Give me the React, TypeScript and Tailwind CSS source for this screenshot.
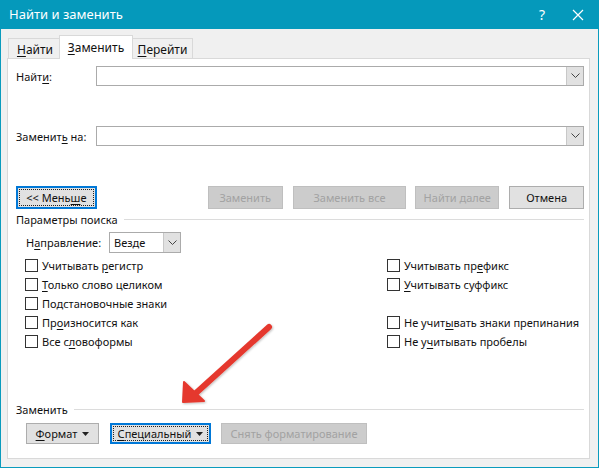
import React from 'react';

const font = { fontFamily: '"Noto Sans", "Open Sans", Arial, sans-serif' };

function U({ children }: { children: React.ReactNode }) {
    return <span className="underline underline-offset-2">{children}</span>;
}

function Chevron() {
    return (
        <svg width="9" height="6" viewBox="0 0 9 6" className="block">
            <path d="M0.5 0.5 L4.5 4.5 L8.5 0.5" fill="none" stroke="#444" strokeWidth="1" />
        </svg>
    );
}

function Caret() {
    return (
        <svg width="7" height="4" viewBox="0 0 7 4" className="ml-[5px] inline-block">
            <path d="M0 0 H7 L3.5 4 Z" fill="#222" />
        </svg>
    );
}

function Combo({ className }: { className: string }) {
    return (
        <div className={`flex h-[20px] border border-[#ababab] bg-white ${className}`}>
            <div className="flex-1" />
            <div className="flex w-[17px] items-center justify-center border-l border-[#c8c8c8] bg-[#e1e1e1]">
                <Chevron />
            </div>
        </div>
    );
}

function Btn({
    children,
    className = '',
    variant = 'normal',
}: {
    children: React.ReactNode;
    className?: string;
    variant?: 'normal' | 'disabled' | 'focus';
}) {
    if (variant === 'disabled') {
        return (
            <div className={`flex items-center justify-center border border-[#bfbfbf] bg-[#cccccc] text-[#a2a2a2] ${className}`}>
                {children}
            </div>
        );
    }
    if (variant === 'focus') {
        return (
            <div className={`flex border-2 border-[#0078d7] bg-[#e1e1e1] p-[1px] ${className}`}>
                <div className="flex flex-1 items-center justify-center border border-dotted border-[#222]">{children}</div>
            </div>
        );
    }
    return (
        <div className={`flex items-center justify-center border border-[#adadad] bg-[#e1e1e1] ${className}`}>
            {children}
        </div>
    );
}

function Check({ children }: { children: React.ReactNode }) {
    return (
        <div className="flex h-[19px] items-center whitespace-nowrap">
            <div className="h-[13px] w-[13px] shrink-0 border border-[#333] bg-white" />
            <span className="ml-[4px]">{children}</span>
        </div>
    );
}

export default function App() {
    return (
        <div
            className="relative flex h-[468px] w-[599px] flex-col border border-t-0 border-[#0a9bbd] bg-[#f0f0f0] text-[11px] leading-none text-[#111]"
            style={font}
        >
            {/* title bar */}
            <div className="-mx-[1px] flex h-[29px] items-center bg-[#0599bb] pl-[9px] pr-[12px] text-white">
                <span className="text-[13px]">Найти и заменить</span>
                <span className="ml-auto text-[14px]">?</span>
                <svg width="12" height="12" viewBox="0 0 12 12" className="ml-[27px] mr-[3px]">
                    <path d="M1 1 L11 11 M11 1 L1 11" stroke="white" strokeWidth="1.2" />
                </svg>
            </div>

            <div className="flex flex-1 flex-col px-[6px] pb-[8px]">
                {/* tabs */}
                <div className="mt-[5px] flex h-[24px] items-end pl-[1px] text-[12px]">
                    <div className="-mr-[1px] flex h-[20px] w-[52px] items-center justify-center border border-b-0 border-[#d9d9d9] bg-[#f0f0f0] pl-[2px] pt-[2px]">
                        <span><U>Н</U>айти</span>
                    </div>
                    <div className="relative z-10 -mb-[1px] flex h-[24px] w-[74px] items-center justify-center border border-b-0 border-[#d9d9d9] bg-white">
                        <span><U>З</U>аменить</span>
                    </div>
                    <div className="-ml-[1px] flex h-[20px] w-[61px] items-center justify-center border border-b-0 border-[#d9d9d9] bg-[#f0f0f0] pt-[2px]">
                        <span><U>П</U>ерейти</span>
                    </div>
                </div>

                {/* panel */}
                <div className="flex w-[583px] flex-1 flex-col border border-[#d9d9d9] bg-white pl-[8px] pr-[5px] pt-[7px]">
                    <div className="flex items-center">
                        <span className="w-[80px]">Найт<U>и</U>:</span>
                        <Combo className="flex-1" />
                    </div>
                    <div className="mt-[40px] flex items-center">
                        <span className="w-[80px]">Заменит<U>ь</U> на:</span>
                        <Combo className="flex-1" />
                    </div>

                    <div className="mt-[40px] flex h-[23px]">
                        <Btn variant="focus" className="w-[81px]">
                            <span>&lt;&lt; Мень<U>ш</U>е</span>
                        </Btn>
                        <Btn variant="disabled" className="ml-[111px] w-[75px]">Заменить</Btn>
                        <Btn variant="disabled" className="ml-[10px] w-[114px]">Заменить все</Btn>
                        <Btn variant="disabled" className="ml-[9px] w-[84px]">Найти далее</Btn>
                        <Btn className="ml-[10px] w-[75px]">Отмена</Btn>
                    </div>

                    <div className="mt-[5px] flex items-center">
                        <span>Параметры поиска</span>
                        <div className="ml-[6px] h-px flex-1 bg-[#dcdcdc]" />
                    </div>

                    <div className="mt-[7px] flex items-center pl-[10px]">
                        <span className="w-[83px]">Н<U>а</U>правление:</span>
                        <div className="flex h-[21px] w-[72px] border border-[#ababab] bg-white">
                            <span className="flex flex-1 items-center pl-[4px]">Везде</span>
                            <div className="flex w-[17px] items-center justify-center border-l border-[#c8c8c8] bg-[#e1e1e1]">
                                <Chevron />
                            </div>
                        </div>
                    </div>

                    <div className="mt-[3px] flex pl-[9px]">
                        <div className="flex w-[362px] flex-col">
                            <Check>Учитывать <U>р</U>егистр</Check>
                            <Check><U>Т</U>олько слово целиком</Check>
                            <Check>Подстановочные знаки</Check>
                            <Check>Пр<U>о</U>износится как</Check>
                            <Check>Все с<U>л</U>овоформы</Check>
                        </div>
                        <div className="flex flex-col">
                            <Check>Учитывать пр<U>е</U>фикс</Check>
                            <Check><U>У</U>читывать суффикс</Check>
                            <div className="h-[19px]" />
                            <Check>Не учит<U>ы</U>вать знаки препинания</Check>
                            <Check>Не у<U>ч</U>итывать пробелы</Check>
                        </div>
                    </div>

                    <div className="mt-[53px] flex items-center">
                        <span>Заменить</span>
                        <div className="ml-[6px] h-px flex-1 bg-[#dcdcdc]" />
                    </div>

                    <div className="mt-[8px] flex h-[21px] pl-[10px]">
                        <Btn className="w-[73px]">
                            <span><U>Ф</U>ормат</span>
                            <Caret />
                        </Btn>
                        <Btn variant="focus" className="ml-[11px] w-[101px]">
                            <span><U>С</U>пециальный</span>
                            <Caret />
                        </Btn>
                        <Btn variant="disabled" className="ml-[10px] w-[146px]">Снять форматирование</Btn>
                    </div>
                </div>
            </div>

            {/* annotation arrow */}
            <svg className="pointer-events-none absolute left-0 top-0" width="599" height="468">
                <defs>
                    <filter id="sh" x="-20%" y="-20%" width="140%" height="140%">
                        <feDropShadow dx="1" dy="1" stdDeviation="1" floodColor="#000" floodOpacity="0.25" />
                    </filter>
                </defs>
                <g filter="url(#sh)">
                    <path d="M268 327 L195 393" stroke="#e5392e" strokeWidth="6" strokeLinecap="round" />
                    <path d="M182 402 L183 382 L203 401 Z" fill="#e5392e" stroke="#e5392e" strokeWidth="2" strokeLinejoin="round" />
                </g>
            </svg>
        </div>
    );
}
